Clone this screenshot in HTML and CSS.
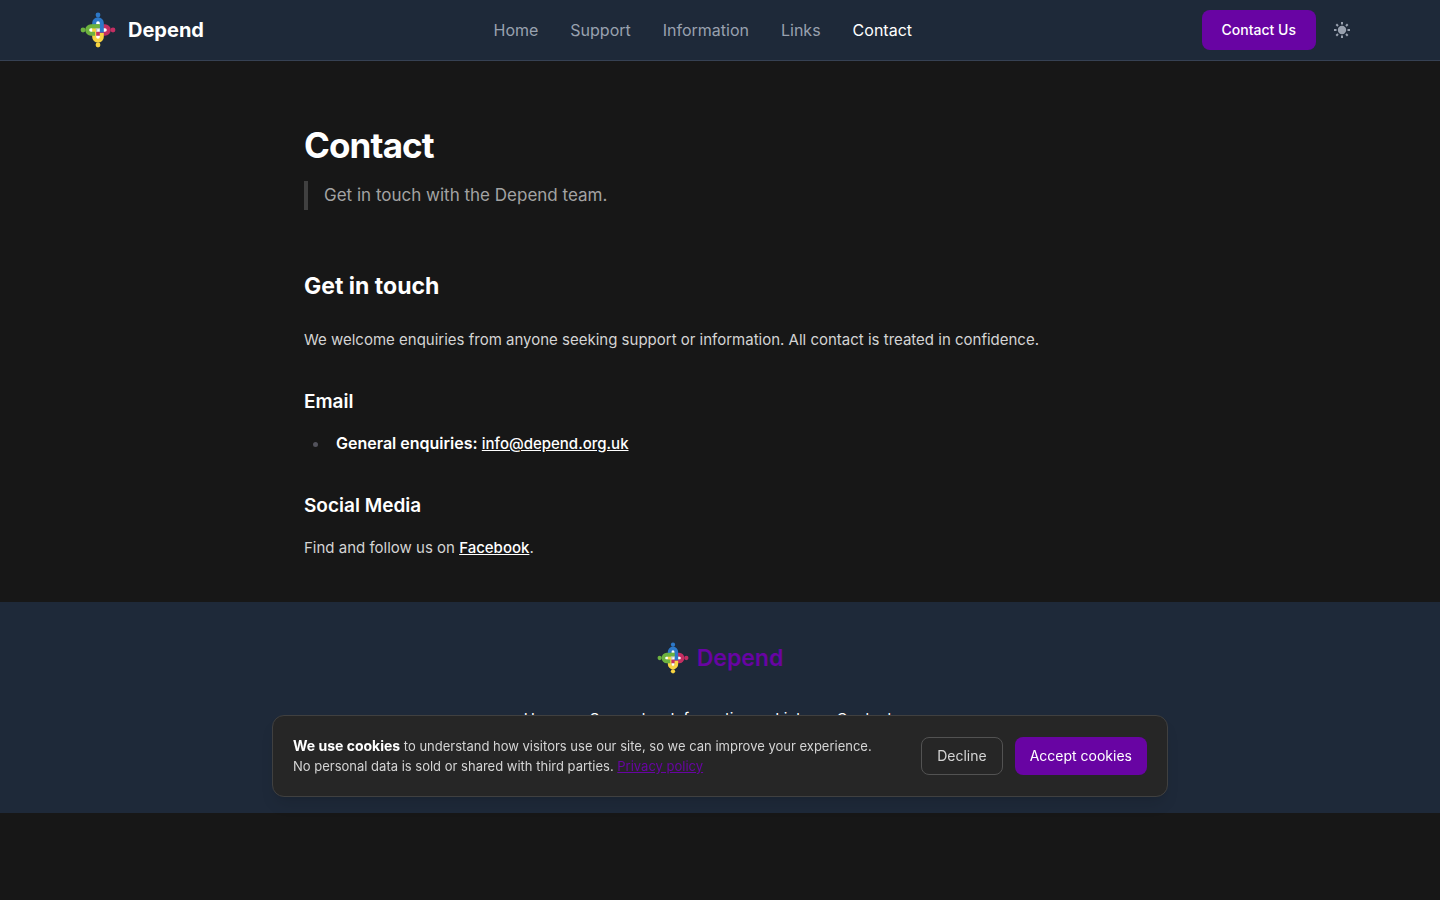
FILE: index.html
```html
<!DOCTYPE html>
<html lang="en">
<head>
<meta charset="utf-8">
<meta name="viewport" content="width=device-width, initial-scale=1">
<title>Contact | Depend</title>
<link rel="stylesheet" href="styles.css">
</head>
<body>
<svg class="sprite" aria-hidden="true">
  <symbol id="arm" viewBox="0 0 36 36">
    <path d="M14.200 15V11a3.800 3.800 0 0 1 7.600 0v9.500" fill="none" stroke="currentColor" stroke-width="4"/>
    <circle cx="18" cy="3" r="2.400" fill="currentColor"/>
  </symbol>
  <symbol id="logo" viewBox="0 0 36 36">
    <path d="M16 9h4v18h-4zM9 16h18v4H9z" fill="#fff"/>
    <use href="#arm" width="36" height="36" color="#c42e62" transform="rotate(90 18 18)"/>
    <use href="#arm" width="36" height="36" color="#f7d441" transform="rotate(180 18 18)"/>
    <use href="#arm" width="36" height="36" color="#6db23f" transform="rotate(270 18 18)"/>
    <use href="#arm" width="36" height="36" color="#2d78c8"/>
    <path d="M12 14.200h7.500" stroke="#6db23f" stroke-width="4"/>
    <path d="M15.500 16.700h4.300M16.700 16.700v3.300" stroke="#b4bbb8" fill="none"/>
  </symbol>
</svg>
<header class="header">
  <div class="header-inner">
    <a class="brand" href="#"><svg class="logo"><use href="#logo"/></svg>Depend</a>
    <nav class="nav" aria-label="Main">
      <a href="#">Home</a><a href="#">Support</a><a href="#">Information</a><a href="#">Links</a><a class="active" href="#" aria-current="page">Contact</a>
    </nav>
    <div class="actions">
      <a class="cta" href="#">Contact Us</a>
      <button class="theme" type="button" aria-label="Toggle theme">
        <svg viewBox="0 0 16 16" width="16" height="16"><circle cx="8" cy="8" r="4.200" fill="currentColor"/><path d="M8 0v2.500M8 13.500V16M0 8h2.500M13.500 8H16M2.300 2.300l1.700 1.700M12 12l1.700 1.700M2.300 13.700L4 12M12 4l1.700-1.700" stroke="currentColor" stroke-width="2" fill="none"/></svg>
      </button>
    </div>
  </div>
</header>
<main class="content">
  <h1>Contact</h1>
  <p class="lead">Get in touch with the Depend team.</p>
  <h2>Get in touch</h2>
  <p>We welcome enquiries from anyone seeking support or information. All contact is treated in confidence.</p>
  <h3>Email</h3>
  <ul><li><strong>General enquiries:</strong> <a href="#">info@depend.org.uk</a></li></ul>
  <h3>Social Media</h3>
  <p>Find and follow us on <a href="#">Facebook</a>.</p>
</main>
<footer class="footer">
  <a class="footer-brand" href="#"><svg class="footer-logo"><use href="#logo"/></svg>Depend</a>
  <nav class="footer-nav" aria-label="Footer">
    <a href="#">Home</a><a href="#">Support</a><a href="#">Information</a><a href="#">Links</a><a href="#">Contact</a>
  </nav>
</footer>
<section class="cookies" aria-label="Cookie notice">
  <p><strong>We use cookies</strong> to understand how visitors use our site, so we can improve your experience.<br>No personal data is sold or shared with third parties. <a href="#">Privacy policy</a></p>
  <div class="cookie-actions">
    <button class="decline" type="button">Decline</button>
    <button class="accept" type="button">Accept cookies</button>
  </div>
</section>
</body>
</html>
```
FILE: styles.css
```css
* { box-sizing: border-box; }
body {
  margin: 0;
  background: #171717;
  color: #d4d4d4;
  font-family: Inter, "Liberation Sans", sans-serif;
  font-size: 15px;
  line-height: 28px;
}
.sprite { position: absolute; width: 0; height: 0; }
h1, h2, h3, p, ul { margin: 0; padding: 0; }
a { color: inherit; }
button { font: inherit; cursor: pointer; }

.header { background: #1e2939; border-bottom: 1px solid #364153; }
.header-inner {
  display: flex;
  align-items: center;
  justify-content: space-between;
  max-width: 1280px;
  min-height: 60px;
  margin: 0 auto;
}
.brand {
  display: flex;
  align-items: center;
  gap: 12px;
  color: #fff;
  font-size: 20px;
  font-weight: 700;
  text-decoration: none;
}
.logo { width: 36px; height: 36px; }
.nav { display: flex; gap: 32px; font-size: 16px; }
.nav a { color: #99a1af; text-decoration: none; }
.nav .active { color: #fff; }
.actions { display: flex; align-items: center; gap: 8px; }
.cta {
  padding: 10px 20px;
  border-radius: 8px;
  background: #6804a3;
  color: #fff;
  font-size: 14px;
  font-weight: 500;
  line-height: 20px;
  text-decoration: none;
}
.theme {
  display: flex;
  padding: 10px;
  border: 0;
  background: none;
  color: #99a1af;
}

.content { max-width: 832px; margin: 0 auto; padding: 64px 0 40px; }
.content h1 {
  color: #fff;
  font-size: 35px;
  font-weight: 700;
  line-height: 40px;
  letter-spacing: -0.025em;
}
.lead {
  margin-top: 16px;
  padding-left: 16px;
  border-left: 4px solid #404040;
  color: #a3a3a3;
  font-size: 17px;
  line-height: 29px;
}
.content h2 {
  margin: 60px 0 24px;
  color: #fff;
  font-size: 23px;
  font-weight: 700;
  line-height: 32px;
}
.content h3 {
  margin: 32px 0 12px;
  color: #fff;
  font-size: 19px;
  font-weight: 600;
  line-height: 32px;
}
.content ul { padding-left: 32px; list-style: none; }
.content li { position: relative; }
.content li::before {
  content: "";
  position: absolute;
  top: 12px;
  left: -23px;
  width: 5px;
  height: 5px;
  border-radius: 50%;
  background: #52525b;
}
.content strong { color: #fff; font-size: 16px; font-weight: 600; line-height: 1; }
.content a { color: #fff; font-weight: 500; }

.footer {
  display: flex;
  flex-direction: column;
  align-items: center;
  gap: 31px;
  padding: 40px 16px 80px;
  background: #1e2939;
}
.footer-brand {
  display: flex;
  align-items: center;
  gap: 8px;
  color: #6804a3;
  font-size: 23px;
  font-weight: 600;
  line-height: 32px;
  text-decoration: none;
}
.footer-logo { width: 32px; height: 32px; }
.footer-nav { display: flex; color: #fff; }
.footer-nav a { margin-right: 24px; text-decoration: none; }

.cookies {
  position: fixed;
  right: 16px;
  bottom: 103px;
  left: 16px;
  display: flex;
  align-items: center;
  gap: 24px;
  max-width: 896px;
  margin: 0 auto;
  padding: 20px;
  border: 1px solid #404040;
  border-radius: 12px;
  background: #262626;
  box-shadow: 0 10px 15px -3px rgba(0, 0, 0, 0.1), 0 4px 6px -4px rgba(0, 0, 0, 0.1);
  font-size: 13px;
  line-height: 20px;
}
.cookies p { flex: 1; }
.cookies strong { color: #fff; font-size: 14px; font-weight: 700; }
.cookies p a { color: #6804a3; }
.cookie-actions { display: flex; gap: 12px; font-size: 14px; }
.cookie-actions button { padding: 8px 15px; border-radius: 8px; }
.decline { border: 1px solid #525252; background: none; color: #d4d4d4; }
.accept { border: 0; background: #6804a3; color: #fff; }
```
